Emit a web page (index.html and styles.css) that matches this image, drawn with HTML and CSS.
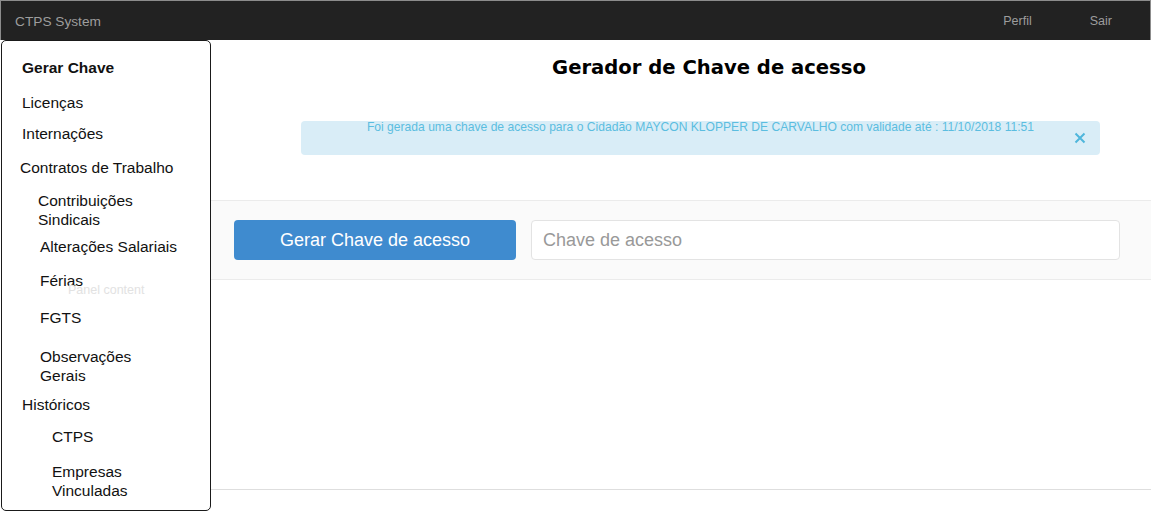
FILE: index.html
```html
<!DOCTYPE html>
<html lang="pt">
<head>
<meta charset="utf-8">
<title>CTPS System</title>
<link rel="stylesheet" href="styles.css">
</head>
<body>
<header class="navbar">
  <span class="brand">CTPS System</span>
  <nav class="nav-links">
    <a class="nav-link perfil" href="#">Perfil</a>
    <a class="nav-link sair" href="#">Sair</a>
  </nav>
</header>
<div class="layout">
  <aside class="sidebar">
    <ul class="menu">
      <li class="item i-gerar">Gerar Chave</li>
      <li class="item i-licencas">Licenças</li>
      <li class="item i-intern">Internações</li>
      <li class="item i-contratos">Contratos de Trabalho</li>
      <li class="item i-contrib">Contribuições<br>Sindicais</li>
      <li class="item i-alter">Alterações Salariais</li>
      <li class="item i-ferias">Férias</li>
      <li class="item i-fgts">FGTS</li>
      <li class="item i-obs">Observações<br>Gerais</li>
      <li class="item i-hist">Históricos</li>
      <li class="item i-ctps">CTPS</li>
      <li class="item i-empresas">Empresas<br>Vinculadas</li>
    </ul>
    <span class="panel-ghost">Panel content</span>
  </aside>
  <main class="main">
    <h1 class="title">Gerador de Chave de acesso</h1>
    <div class="alert">
      <p class="alert-text">Foi gerada uma chave de acesso para o Cidadão MAYCON KLOPPER DE CARVALHO com validade até : 11/10/2018 11:51</p>
      <button class="alert-close" type="button" aria-label="Fechar">
        <svg width="12" height="12" viewBox="0 0 12 12"><path d="M1.5 1.5 L10.5 10.5 M10.5 1.5 L1.5 10.5" stroke="#4fb6dc" stroke-width="2" fill="none"/></svg>
      </button>
    </div>
    <section class="panel">
      <button class="btn-primary" type="button">Gerar Chave de acesso</button>
      <input class="key-input" type="text" placeholder="Chave de acesso">
    </section>
    <div class="footer-line"></div>
  </main>
</div>
</body>
</html>
```

FILE: styles.css
```css
* { box-sizing: border-box; }
html, body { margin: 0; padding: 0; background: #fff; }
body {
  font-family: "Liberation Sans", Arial, sans-serif;
  color: #111;
  width: 1151px;
  height: 511px;
  overflow: hidden;
}

.navbar {
  height: 40px;
  background: #222;
  border: 1px solid #8c8c8c;
  border-bottom: none;
  display: flex;
  align-items: center;
  padding-left: 14px;
}
.brand {
  color: #9d9d9d;
  font-size: 13.7px;
  margin-top: 1px;
}
.nav-links {
  margin-left: auto;
  display: flex;
  margin-top: 1px;
}
.nav-link {
  color: #9d9d9d;
  font-size: 12.5px;
  text-decoration: none;
}
.perfil { margin-right: 58px; }
.sair { margin-right: 38px; }

.layout {
  display: flex;
  align-items: flex-start;
}

.sidebar {
  position: relative;
  width: 210px;
  height: 471px;
  margin-left: 1px;
  border: 1px solid #1a1a1a;
  border-radius: 5px;
  background: #fff;
  flex: none;
}
.menu {
  list-style: none;
  margin: 0;
  padding: 0;
  font-size: 15.5px;
  line-height: 19px;
  color: #111;
}
.item { margin: 0; }
.i-gerar { font-weight: bold; padding-left: 20px; margin-top: 17px; }
.i-licencas { padding-left: 20px; margin-top: 16px; }
.i-intern { padding-left: 20px; margin-top: 12px; }
.i-contratos { padding-left: 18px; margin-top: 15px; }
.i-contrib { padding-left: 36px; margin-top: 14px; }
.i-alter { padding-left: 38px; margin-top: 8px; }
.i-ferias { padding-left: 38px; margin-top: 15px; }
.i-fgts { padding-left: 38px; margin-top: 18px; }
.i-obs { padding-left: 38px; margin-top: 20px; }
.i-hist { padding-left: 20px; margin-top: 10px; }
.i-ctps { padding-left: 50px; margin-top: 13px; }
.i-empresas { padding-left: 50px; margin-top: 16px; }

.panel-ghost {
  position: absolute;
  left: 66px;
  top: 242px;
  font-size: 12.5px;
  color: #e2e2e2;
  white-space: nowrap;
}

.main {
  flex: 1;
  min-width: 0;
}
.title {
  margin: 0;
  padding: 16px 0 0 56px;
  text-align: center;
  font-family: "DejaVu Sans", Verdana, sans-serif;
  font-weight: bold;
  font-size: 19.6px;
  line-height: 24px;
  color: #000;
}

.alert {
  position: relative;
  margin: 41px 0 0 90px;
  width: 799px;
  height: 34px;
  background: #d9edf7;
  border-radius: 4px;
}
.alert-text {
  margin: 0;
  text-align: center;
  font-size: 12.1px;
  line-height: 12px;
  color: #5bbde0;
}
.alert-close {
  position: absolute;
  right: 14px;
  top: 11px;
  width: 12px;
  height: 12px;
  padding: 0;
  border: none;
  background: none;
  display: block;
}
.alert-close svg { display: block; }

.panel {
  margin-top: 45px;
  background: #fafafa;
  border-top: 1px solid #ebebeb;
  border-bottom: 1px solid #ebebeb;
  padding: 19px 31px 19px 23px;
  display: flex;
  gap: 15px;
}
.btn-primary {
  width: 282px;
  height: 40px;
  background: #3f8bcf;
  color: #fff;
  border: none;
  border-radius: 4px;
  font-family: "Liberation Sans", Arial, sans-serif;
  font-size: 18px;
  padding: 0;
  flex: none;
}
.key-input {
  flex: 1;
  height: 40px;
  border: 1px solid #e3e3e3;
  border-radius: 4px;
  background: #fff;
  font-family: "Liberation Sans", Arial, sans-serif;
  font-size: 18px;
  padding: 0 11px;
  color: #555;
  outline: none;
}
.key-input::placeholder { color: #999; }

.footer-line {
  margin-top: 209px;
  border-top: 1px solid #dedede;
}
```
